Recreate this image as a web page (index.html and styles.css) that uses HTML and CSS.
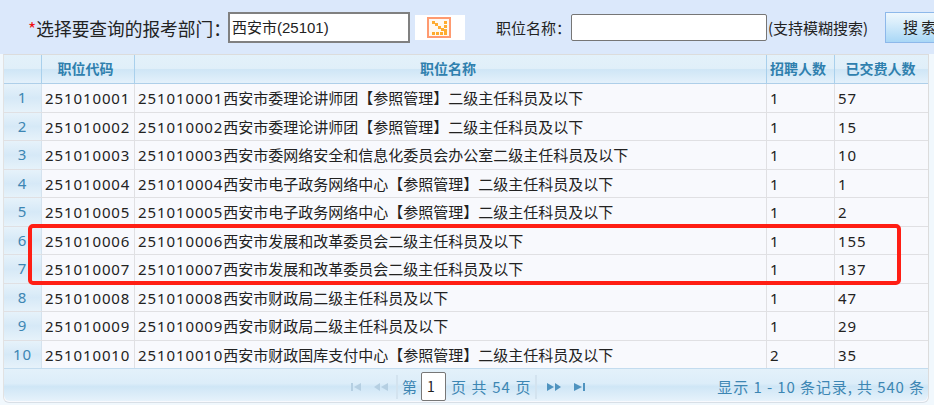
FILE: index.html
```html
<!DOCTYPE html>
<html lang="zh-CN">
<head>
<meta charset="utf-8">
<title>职位查询</title>
<link rel="stylesheet" href="styles.css">
</head>
<body>
<form class="search">
  <span class="dept-label"><span class="req">*</span>选择要查询的报考部门：</span>
  <div class="input dept-input">西安市(25101)</div>
  <div class="picker">
    <svg width="24" height="21" viewBox="0 0 24 21">
      <rect x="1" y="1" width="22" height="19" fill="#fff8f0" stroke="#ff9a70" stroke-width="2"/>
      <g fill="#ffab2e">
        <rect x="5" y="4" width="3" height="3"/><rect x="8" y="6" width="3" height="3"/><rect x="11" y="9" width="3" height="3"/><rect x="14" y="11" width="3" height="3"/>
        <rect x="17" y="4" width="3" height="3"/><rect x="17" y="8" width="3" height="3"/><rect x="17" y="12" width="3" height="3"/><rect x="17" y="15" width="3" height="3"/>
        <rect x="5" y="15" width="3" height="3"/><rect x="9" y="15" width="3" height="3"/><rect x="13" y="15" width="3" height="3"/>
      </g>
    </svg>
  </div>
  <span class="name-label">职位名称：</span>
  <div class="input name-input"></div>
  <span class="hint">(支持模糊搜索)</span>
  <div class="btn">搜 索</div>
</form>

<div class="grid">
  <div class="row head">
    <div class="num"></div><div class="c">职位代码</div><div class="c">职位名称</div><div class="c">招聘人数</div><div class="c">已交费人数</div>
  </div>
  <div class="row"><div class="num">1</div><div class="c"><span class="d">251010001</span></div><div class="c"><span class="d">251010001</span>西安市委理论讲师团【参照管理】二级主任科员及以下</div><div class="c"><span class="d">1</span></div><div class="c"><span class="d">57</span></div></div>
  <div class="row"><div class="num">2</div><div class="c"><span class="d">251010002</span></div><div class="c"><span class="d">251010002</span>西安市委理论讲师团【参照管理】二级主任科员及以下</div><div class="c"><span class="d">1</span></div><div class="c"><span class="d">15</span></div></div>
  <div class="row"><div class="num">3</div><div class="c"><span class="d">251010003</span></div><div class="c"><span class="d">251010003</span>西安市委网络安全和信息化委员会办公室二级主任科员及以下</div><div class="c"><span class="d">1</span></div><div class="c"><span class="d">10</span></div></div>
  <div class="row"><div class="num">4</div><div class="c"><span class="d">251010004</span></div><div class="c"><span class="d">251010004</span>西安市电子政务网络中心【参照管理】二级主任科员及以下</div><div class="c"><span class="d">1</span></div><div class="c"><span class="d">1</span></div></div>
  <div class="row"><div class="num">5</div><div class="c"><span class="d">251010005</span></div><div class="c"><span class="d">251010005</span>西安市电子政务网络中心【参照管理】二级主任科员及以下</div><div class="c"><span class="d">1</span></div><div class="c"><span class="d">2</span></div></div>
  <div class="row"><div class="num">6</div><div class="c"><span class="d">251010006</span></div><div class="c"><span class="d">251010006</span>西安市发展和改革委员会二级主任科员及以下</div><div class="c"><span class="d">1</span></div><div class="c"><span class="d">155</span></div></div>
  <div class="row"><div class="num">7</div><div class="c"><span class="d">251010007</span></div><div class="c"><span class="d">251010007</span>西安市发展和改革委员会二级主任科员及以下</div><div class="c"><span class="d">1</span></div><div class="c"><span class="d">137</span></div></div>
  <div class="row"><div class="num">8</div><div class="c"><span class="d">251010008</span></div><div class="c"><span class="d">251010008</span>西安市财政局二级主任科员及以下</div><div class="c"><span class="d">1</span></div><div class="c"><span class="d">47</span></div></div>
  <div class="row"><div class="num">9</div><div class="c"><span class="d">251010009</span></div><div class="c"><span class="d">251010009</span>西安市财政局二级主任科员及以下</div><div class="c"><span class="d">1</span></div><div class="c"><span class="d">29</span></div></div>
  <div class="row"><div class="num">10</div><div class="c"><span class="d">251010010</span></div><div class="c"><span class="d">251010010</span>西安市财政国库支付中心【参照管理】二级主任科员及以下</div><div class="c"><span class="d">2</span></div><div class="c"><span class="d">35</span></div></div>
  <div class="pager">
    <svg class="pg-icon" width="40" height="10" viewBox="0 0 40 10">
      <g fill="#b5cfe2"><rect x="1" y="1" width="2" height="8"/><path d="M4 5l7-4v8zM24 5l6-4v8zM31 5l7-4v8z"/></g>
    </svg>
    <span class="sep first"></span>
    <span class="pg-t">第</span><span class="pg-input">1</span><span class="pg-t pg-mid">页 共 54 页</span>
    <span class="sep second"></span>
    <svg class="pg-icon" width="40" height="10" viewBox="0 0 40 10">
      <g fill="#4f93bf"><path d="M1 1l7 4-7 4zM9 1l6 4-6 4zM28 1l8 4-8 4z"/><rect x="37" y="1" width="2" height="8"/></g>
    </svg>
    <span class="pg-info">显示 1 - 10 条记录, 共 540 条</span>
  </div>
  <div class="mark"></div>
</div>
</body>
</html>
```
FILE: styles.css
```css
html, body { margin: 0; padding: 0; }
body {
  width: 934px;
  height: 405px;
  overflow: hidden;
  background: #f1f8fd;
  font-family: "Noto Sans CJK SC", "Noto Sans", sans-serif;
  color: #222;
}
.search {
  height: 54px;
  background: #dbe8fb;
  display: flex;
  align-items: center;
  padding-left: 28px;
  white-space: nowrap;
  overflow: hidden;
  box-sizing: border-box;
}
.dept-label { font-size: 17.7px; width: 200px; flex: none; color: #222; margin-top: 1px; }
.req { color: #f01010; }
.input { background: #fff; box-sizing: border-box; flex: none; }
.dept-input {
  width: 182px; height: 31px;
  border: 2px solid #808080;
  font-size: 15px; line-height: 27px; padding-left: 2px;
  font-family: "Liberation Sans", "Noto Sans CJK SC", sans-serif;
}
.picker {
  width: 50px; height: 25px; margin-left: 5px; background: #fff; flex: none;
  display: flex; align-items: center; justify-content: center;
}
.picker svg { margin-left: -3px; }
.name-label { font-size: 15px; width: 75px; margin-left: 31px; flex: none; }
.name-input { width: 196px; height: 27px; border: 1px solid #767676; border-radius: 2px; }
.hint { font-size: 15px; width: 117px; margin-left: 1px; flex: none; }
.btn {
  width: 60px; height: 31px; flex: none; box-sizing: border-box;
  border: 1px solid #8db8ea;
  background: linear-gradient(#eef7fd, #d8edfb 35%, #a9d7f6);
  font-size: 15px; line-height: 28px; padding-left: 17px;
}
.grid {
  position: relative;
  margin-left: 3px;
  width: 926px;
  box-sizing: border-box;
  background: #f8f9fd;
  border-top: 1px solid #dcdcdc;
  border-right: 1px solid #dcdcdc;
  border-left: 1px solid #e2e2e2;
  border-bottom: 1px solid #d8dfe6;
  border-radius: 0 0 6px 6px;
  height: 349px;
}
.row {
  display: grid;
  grid-template-columns: 38px 93px 632px 68px 1fr;
  height: 28.5px;
  box-sizing: border-box;
  border-bottom: 1px solid #e0e0e3;
  font-size: 15px;
  line-height: 27px;
  color: #222;
}
.row .c {
  border-right: 1px solid #e0e0e3;
  padding-left: 3px;
  white-space: nowrap;
  overflow: hidden;
}
.row .c:last-child { border-right: 0; }
.d { letter-spacing: .9px; font-family: "Noto Sans", sans-serif; }
.num {
  background: linear-gradient(#e6f2fa, #d6e9f7 50%, #e6f2fa);
  border-right: 1px solid #d4e2ee;
  text-align: center;
  color: #3d86b3;
  letter-spacing: 1px;
  font-family: "Noto Sans", sans-serif;
}
.row.head {
  height: 29px;
  background: linear-gradient(#e3f1fa, #e0eff9 48%, #cfe6f6 52%, #e4f1fb);
  border-bottom: 1px solid #aecfe9;
  font-size: 14px;
  font-weight: 700;
  color: #2f80ae;
  line-height: 26px;
}
.row.head .num { background: none; border-right: 1px solid #a9d0ec; }
.row.head .c { text-align: center; padding: 0 5px 0 0; border-right: 1px solid #a9d0ec; }
.row.head .c:last-child { border-right: 0; padding-right: 2px; }
.pager {
  height: 33px;
  display: flex;
  align-items: center;
  padding: 3px 3px 0 346px;
  background: linear-gradient(#e3f1fa, #dcedf9 45%, #cfe6f6 55%, #e6f2fb);
  border-top: 1px solid #c3dcef;
  margin-top: -1px;
  border-radius: 0 0 6px 6px;
  font-size: 15px;
  color: #3d86b3;
  box-sizing: border-box;
  white-space: nowrap;
}
.pg-icon { flex: none; }
.sep { width: 2px; height: 24px; background: #d3e3ef; flex: none; }
.sep.first { margin: 0 4px 0 6px; }
.sep.second { margin: 0 9px 0 3px; }
.pg-t { flex: none; }
.pg-input {
  width: 25px; height: 29px; margin: 0 5px 0 4px; box-sizing: border-box;
  border: 1px solid #777; border-radius: 2px; background: #fff;
  color: #222; font-size: 14px; line-height: 27px; padding-left: 5px; flex: none;
}
.pg-mid { letter-spacing: 1.1px; }
.pg-info { margin-left: auto; letter-spacing: .9px; flex: none; font-size: 15px; }
.mark {
  position: absolute;
  left: 24px; top: 169px;
  width: 873px; height: 61px;
  box-sizing: border-box;
  border: 4px solid #ff1e14;
  border-radius: 5px;
  pointer-events: none;
}
```
